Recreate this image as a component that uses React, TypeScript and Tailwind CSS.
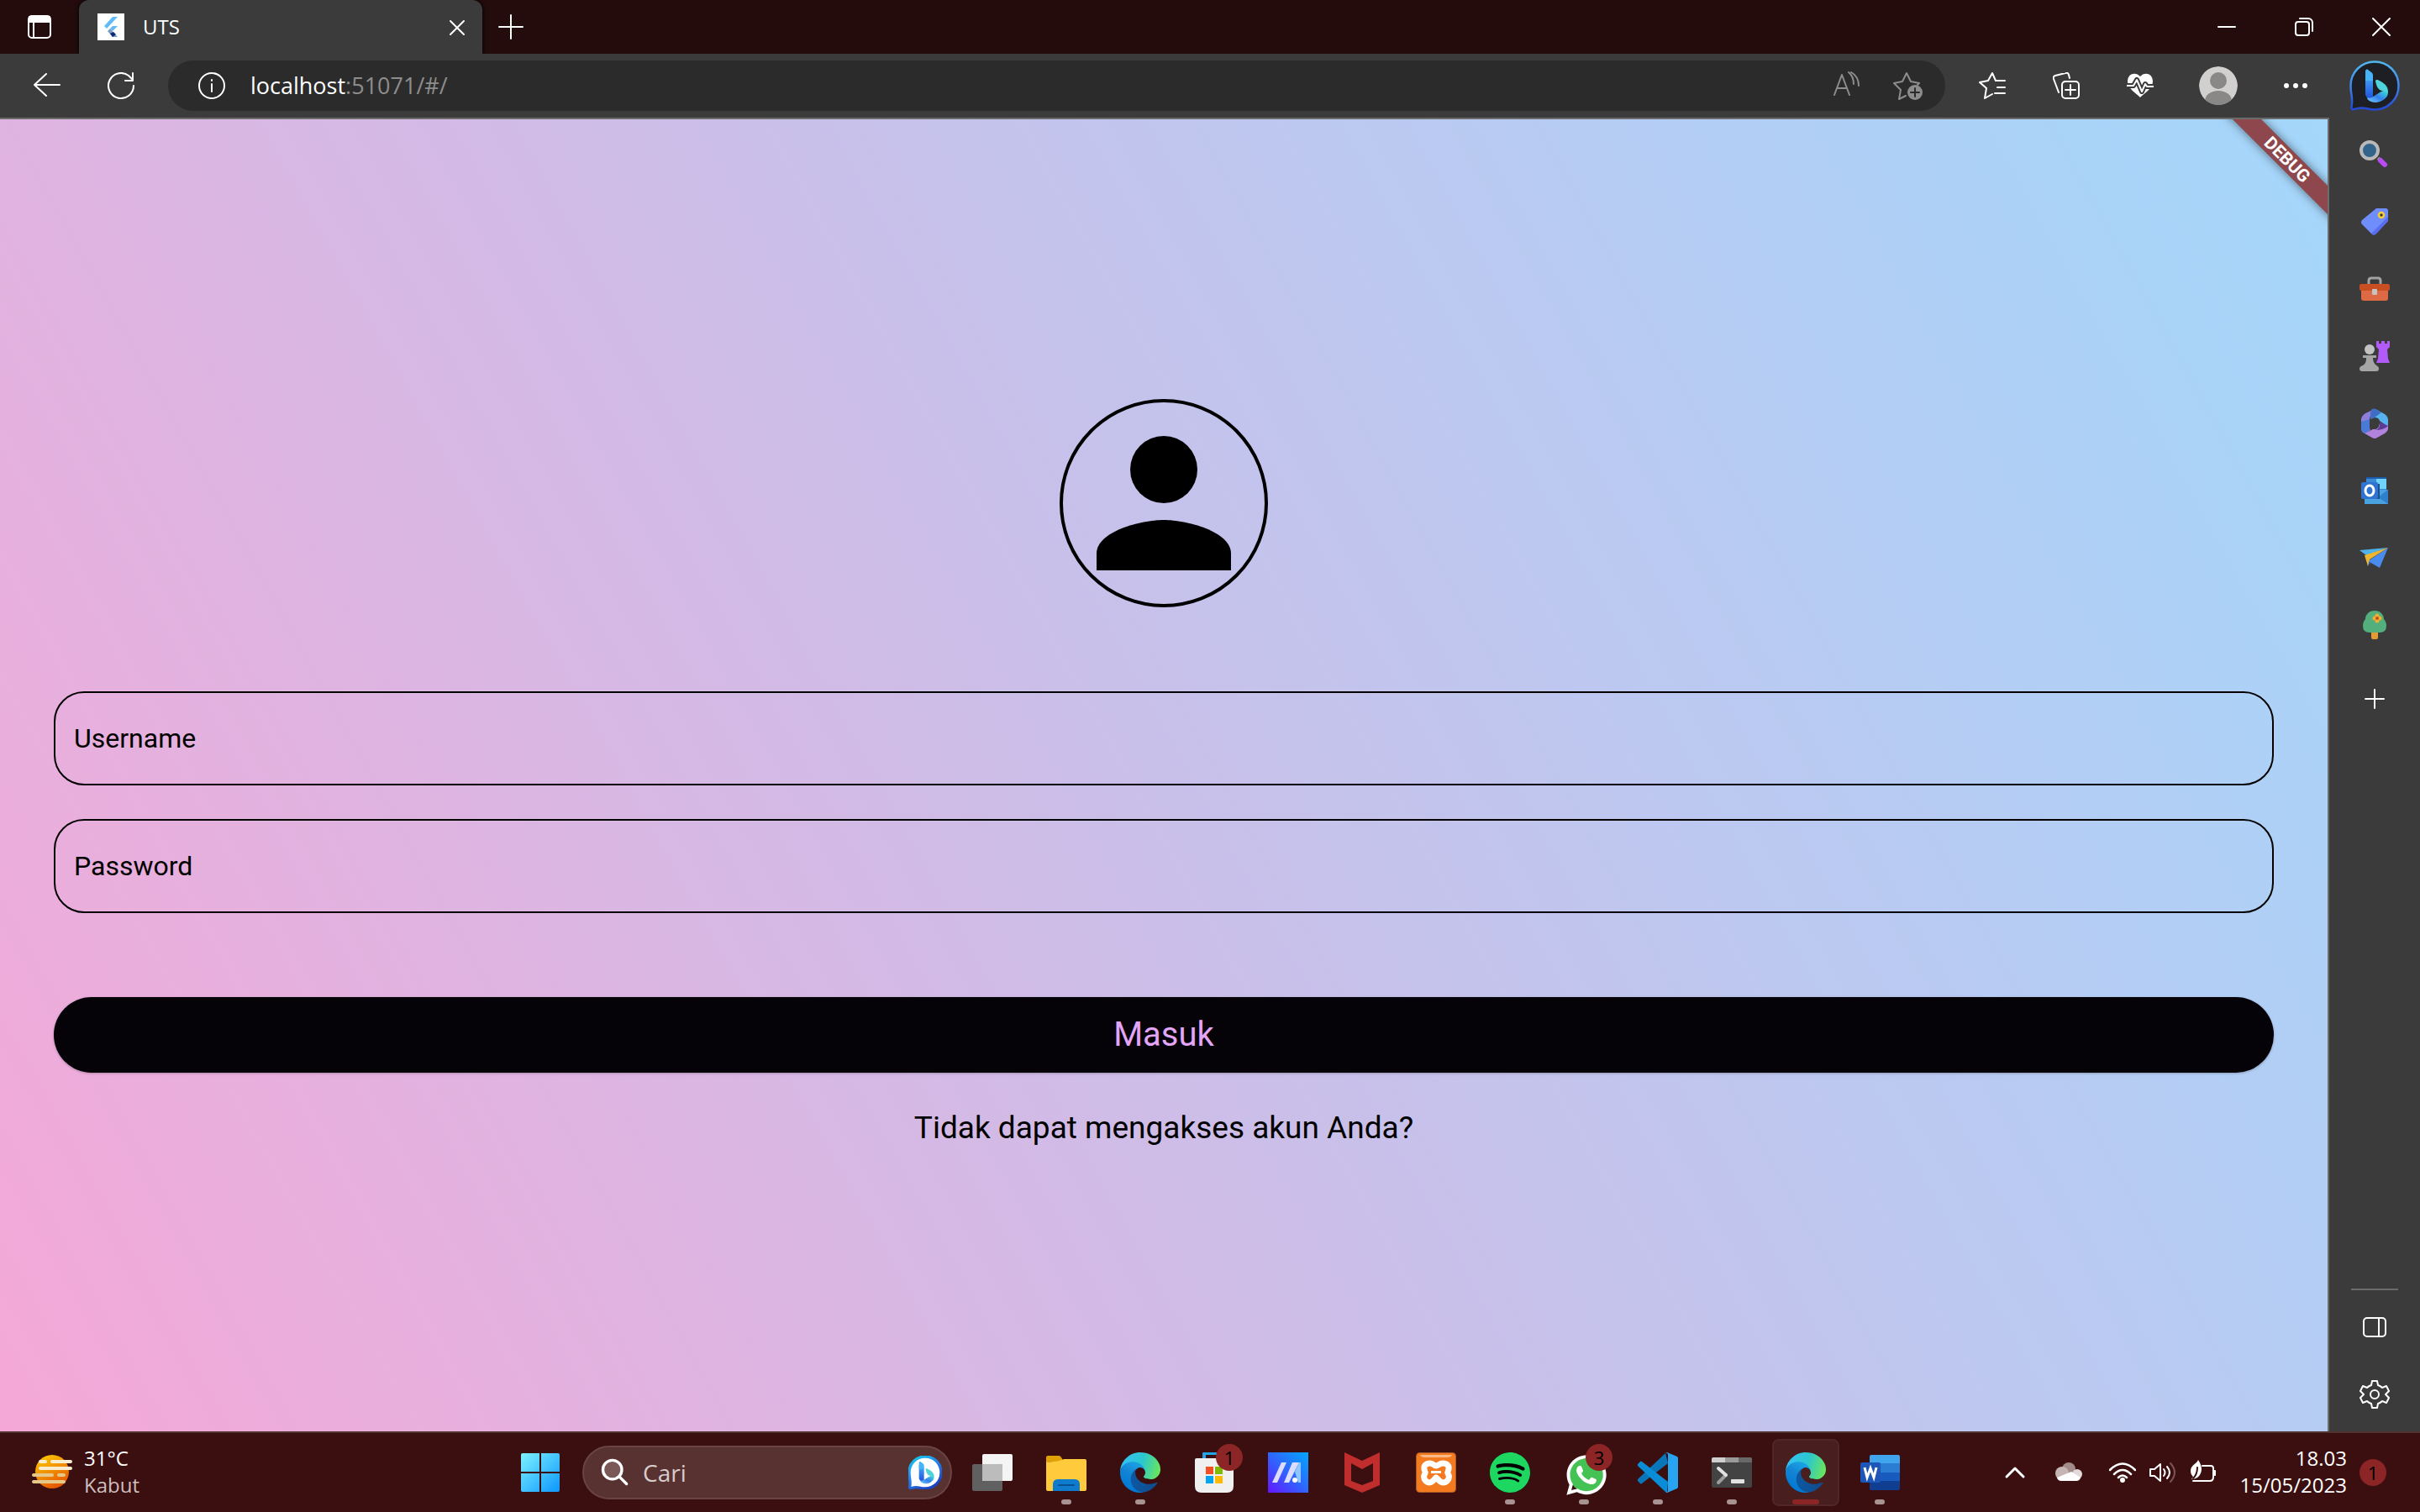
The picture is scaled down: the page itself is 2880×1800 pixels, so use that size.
import type { ReactNode } from "react";
import { FaWhatsapp } from "react-icons/fa";
import { SiSpotify } from "react-icons/si";

type IconProps = { className?: string; box?: string; children?: ReactNode };

function Line({ className = "size-8", box = "0 0 32 32", children }: IconProps) {
  return (
    <svg
      className={className}
      viewBox={box}
      fill="none"
      stroke="currentColor"
      strokeWidth="2"
      strokeLinecap="round"
      strokeLinejoin="round"
      aria-hidden="true"
    >
      {children}
    </svg>
  );
}

function Art({ className = "size-12", box = "0 0 48 48", children }: IconProps) {
  return (
    <svg className={className} viewBox={box} aria-hidden="true">
      {children}
    </svg>
  );
}

/* ---------- Shared logos ---------- */

function Gradients() {
  return (
    <svg className="absolute size-0" aria-hidden="true">
      <defs>
        <linearGradient id="edgeDark" x1="60" y1="176" x2="240" y2="176" gradientUnits="userSpaceOnUse">
          <stop offset="0" stopColor="#0c59a4" />
          <stop offset="1" stopColor="#114a8b" />
        </linearGradient>
        <linearGradient id="edgeBlue" x1="120" y1="90" x2="40" y2="230" gradientUnits="userSpaceOnUse">
          <stop offset="0" stopColor="#1b9de2" />
          <stop offset="0.4" stopColor="#1384d4" />
          <stop offset="1" stopColor="#0078d4" />
        </linearGradient>
        <linearGradient id="edgeGreen" x1="10" y1="60" x2="250" y2="130" gradientUnits="userSpaceOnUse">
          <stop offset="0" stopColor="#35c1f1" />
          <stop offset="0.5" stopColor="#2cc7cf" />
          <stop offset="1" stopColor="#6be758" />
        </linearGradient>
        <linearGradient id="bingRing" x1="0" y1="0" x2="0" y2="1">
          <stop offset="0" stopColor="#4fb6ec" />
          <stop offset="0.5" stopColor="#3f86ec" />
          <stop offset="1" stopColor="#2348cf" />
        </linearGradient>
        <linearGradient id="bingRingLight" x1="0" y1="0" x2="0.6" y2="1">
          <stop offset="0" stopColor="#0fd3e8" />
          <stop offset="0.5" stopColor="#2784ee" />
          <stop offset="1" stopColor="#1a44c4" />
        </linearGradient>
        <linearGradient id="bingStem" x1="0" y1="0" x2="0" y2="1">
          <stop offset="0" stopColor="#48b4f8" />
          <stop offset="1" stopColor="#1e54dc" />
        </linearGradient>
        <linearGradient id="bingTail" x1="0" y1="1" x2="1" y2="0">
          <stop offset="0" stopColor="#74d0fa" />
          <stop offset="0.5" stopColor="#3480ee" />
          <stop offset="1" stopColor="#3ae0d4" />
        </linearGradient>
      </defs>
    </svg>
  );
}

function EdgeLogo() {
  return (
    <Art box="0 0 256 256">
      <path fill="url(#edgeDark)" d="M231.1 190.5c-3.4 1.8-6.9 3.4-10.5 4.7-11.5 4.3-23.6 6.5-35.9 6.5-47.3 0-88.5-32.5-88.5-74.3.1-11.4 6.4-21.9 16.4-27.3-42.8 1.8-53.8 46.4-53.8 72.5 0 73.9 68.1 81.4 82.8 81.4 7.9 0 19.8-2.3 27-4.6l1.3-.4c27.6-9.5 51-28.1 66.6-52.8 1.2-1.9.6-4.3-1.2-5.5-1.3-.8-2.9-.9-4.2-.2z" />
      <path fill="url(#edgeBlue)" d="M105.7 241.4c-8.9-5.5-16.6-12.8-22.7-21.3-26.3-36-18.4-86.5 17.6-112.8 3.8-2.7 7.7-5.2 11.9-7.2 3.1-1.5 8.4-4.1 15.5-4 10.1.1 19.6 4.9 25.7 13 4 5.4 6.3 11.9 6.4 18.7 0-.2 24.5-79.6-80-79.6C36.2 48.2.1 89.9.1 126.4c-.2 19.3 4 38.5 12.1 56 27.6 58.8 94.8 87.6 156.4 67.1-21.1 6.6-44.1 3.7-62.9-8.1z" />
      <path fill="url(#edgeGreen)" d="M152.3 148.9c-.8 1-3.3 2.5-3.3 5.7 0 2.6 1.7 5.1 4.7 7.2 14.4 10 41.5 8.7 41.6 8.7 10.7 0 21.1-2.9 30.3-8.3 18.8-11 30.4-31.1 30.4-52.9.3-22.4-8-37.3-11.3-43.9C223.5 23.9 177.7 0 128 0 58 0 1 56.2 0 126.2c.5-36.5 36.8-66 80-66 3.5 0 23.5.3 42 10.1 16.3 8.6 24.9 18.9 30.8 29.2 6.2 10.7 7.3 24.1 7.3 29.5s-2.8 13.3-7.8 19.9z" />
    </Art>
  );
}

function BingLogo({ className, light = false }: { className: string; light?: boolean }) {
  return (
    <Art className={className} box="0 0 60 60">
      <path
        d="M30 1.5C14 1.5 1.5 14 1.5 30c0 12 3 13 1 25.500c-.4 2.500 1 3.300 3 2.500 6-2 10-2 14-1 3.500 1 7 1.500 10.500 1.500 16 0 28.500-12.500 28.500-28.500S46 1.500 30 1.500z"
        fill={light ? "#ffffff" : "#1d1f24"}
        stroke={light ? "url(#bingRingLight)" : "url(#bingRing)"}
        strokeWidth={light ? 5 : 2.5}
      />
      <path d="M19 17c0-2 1.500-2.500 3-1.500l4 3c1.500 1 2 2.500 2 4V42c0 3-4 4-6.500 2.500C19.500 43 19 41 19 39z" fill="url(#bingStem)" />
      <path d="M19 13c0-2 1.500-3 3-2l4 3c1.500 1 2 2.500 2 4v6h-9z" fill="#48b4f8" />
      <path d="M31 25c0-2 1.500-2.500 3.500-1.500C42 27 46 31 46 37c0 2-.5 3.500-1.500 5-.5-3-3-5-6-6-4-1.300-5.500-4-6.500-7.500z" fill="#4fd3dc" />
      <path d="M21 44c3 1.500 5.500 0 8-1.500l8-5c4-2.500 8.500 0 8.500 3.500-1 3-3.500 5-6 6.500-4 2.400-8 3-12 2-4-1-6.500-3-6.500-5.500z" fill="url(#bingTail)" />
    </Art>
  );
}

/* ---------- Browser chrome ---------- */

function TitleBar() {
  return (
    <header className="flex h-16 items-center bg-[#240c0c] text-white">
      <button aria-label="Tab actions" className="flex h-16 w-[94px] items-center justify-center">
        <Line className="size-8">
          <rect x="3" y="3" width="26" height="26" rx="4" />
          <path d="M4 4h24v6H4z" fill="currentColor" />
          <path d="M9 10v18" />
        </Line>
      </button>
      <div className="flex h-16 w-[480px] items-center rounded-t-xl bg-[#3b3b3b] pr-[14px] pl-[22px] shadow-[0_0_6px_#000000]">
        <Art className="size-8" box="0 0 32 32">
          <path d="M0 0h32v32H0z" fill="#ffffff" />
          <path d="M18 4h6L11 18l-3-3z" fill="#5fbcf6" />
          <path d="M18 15h6l-6 6-3-3z" fill="#5fbcf6" />
          <path d="M12 21l3-3 9 10h-6z" fill="#7f9cc4" />
          <path d="M15 24l4-2 3 3-4 3z" fill="#0b2a78" />
        </Art>
        <span className="ml-[22px] text-2xl">UTS</span>
        <button aria-label="Close tab" className="ml-auto flex size-8 items-center justify-center">
          <Line className="size-8">
            <path d="M8 9l16 16M24 9L8 25" />
          </Line>
        </button>
      </div>
      <button aria-label="New tab" className="ml-4 flex size-9 items-center justify-center">
        <Line className="size-8">
          <path d="M16 2v28M2 16h28" />
        </Line>
      </button>
      <div className="ml-auto flex">
        <button aria-label="Minimize" className="flex h-16 w-[92px] items-center justify-center">
          <Line>
            <path d="M6 16h20" />
          </Line>
        </button>
        <button aria-label="Restore" className="flex h-16 w-[92px] items-center justify-center">
          <Line>
            <rect x="6" y="10" width="16" height="16" rx="3" />
            <path d="M11 6h10a5 5 0 0 1 5 5v10" />
          </Line>
        </button>
        <button aria-label="Close" className="flex h-16 w-[92px] items-center justify-center">
          <Line>
            <path d="M6 6l20 20M26 6L6 26" />
          </Line>
        </button>
      </div>
    </header>
  );
}

function Toolbar() {
  return (
    <div className="flex h-[76px] items-center bg-[#3b3b3b] text-white">
      <button aria-label="Back" className="ml-10 size-8">
        <Line>
          <path d="M31 15H1M15 2L1 15l14 13" />
        </Line>
      </button>
      <button aria-label="Refresh" className="ml-14 size-8">
        <Line>
          <path d="M31 16A15 15 0 1 1 25 4l4 4M30 1v9h-9" />
        </Line>
      </button>
      <div className="ml-10 flex h-[60px] flex-1 items-center rounded-full bg-[#2b2b2b] pr-[26px] pl-9">
        <Line>
          <circle cx="16" cy="16" r="15" />
          <path d="M16 14v9M16 9v1" />
        </Line>
        <a href="#/" className="ml-[30px] text-[27px] leading-10 text-[#8d8d8d]">
          <span className="text-white">localhost</span>:51071/#/
        </a>
        <div className="ml-auto flex gap-10 text-[#8d8d8d]">
          <button aria-label="Read aloud" className="size-8">
            <Line>
              <path d="M2 29L11 5l9 24M5 21h12M19 2q6 5 6 14M22 2q9 5 9 16" />
            </Line>
          </button>
          <button aria-label="Add to favorites" className="size-9">
            <Line className="size-9" box="0 0 36 36">
              <path d="M15 30l-8 4 2-11-8-8 10-2 5-10 5 10 10 2-2 2" />
              <circle cx="26" cy="26" r="9" fill="currentColor" stroke="none" />
              <path d="M26 21v10M21 26h10" stroke="#2b2b2b" />
            </Line>
          </button>
        </div>
      </div>
      <div className="ml-10 flex items-center gap-14">
        <button aria-label="Favorites" className="size-8">
          <Line>
            <path d="M16 26l-9 5 2-12-8-7 10-2 5-9 4 9h11M22 18h9M19 25h12" />
          </Line>
        </button>
        <button aria-label="Collections" className="size-8">
          <Line>
            <rect x="11" y="11" width="20" height="20" rx="4" />
            <path d="M21 15v12M15 21h12M7 24L1 8q-1-3 2-4l12-3q3-1 4 2l1 4" />
          </Line>
        </button>
        <button aria-label="Browser essentials" className="size-8">
          <Line>
            <path d="M16 5C11-1 1 1 1 11c0 8 10 14 15 19 5-5 15-11 15-19C31 1 21-1 16 5z" fill="currentColor" stroke="none" />
            <path d="M0 16h8l4-7 6 14 4-9 2 3h8" stroke="#3b3b3b" strokeWidth="6" />
            <path d="M0 16h8l4-7 6 14 4-9 2 3h8" />
          </Line>
        </button>
      </div>
      <button aria-label="Profile" className="ml-[54px] size-[46px]">
        <Art className="size-[46px] rounded-full" box="0 0 46 46">
          <circle cx="23" cy="23" r="23" fill="#d2d0ce" />
          <circle cx="23" cy="17" r="10" fill="#8a8886" />
          <ellipse cx="23" cy="41" rx="16" ry="12" fill="#8a8886" />
        </Art>
      </button>
      <button aria-label="Settings and more" className="ml-[53px] size-8">
        <Art className="size-8" box="0 0 32 32">
          <g fill="#ffffff">
            <circle cx="5" cy="16" r="3" />
            <circle cx="16" cy="16" r="3" />
            <circle cx="27" cy="16" r="3" />
          </g>
        </Art>
      </button>
      <button aria-label="Bing chat" className="mr-6 ml-12 size-[60px]">
        <BingLogo className="size-[60px]" />
      </button>
    </div>
  );
}

/* ---------- Edge sidebar ---------- */

const sidebarItems: { name: string; art: ReactNode }[] = [
  {
    name: "Search",
    art: (
      <>
        <path d="M22 22l4 4" stroke="#8a8886" strokeWidth="4" />
        <circle cx="12" cy="13" r="10" fill="#33658c" stroke="#b9b9b9" strokeWidth="4" />
        <path d="M25 25l5 5" stroke="#b94bf7" strokeWidth="6" strokeLinecap="round" />
      </>
    ),
  },
  {
    name: "Shopping",
    art: (
      <>
        <path d="M20 2h11q3 0 3 3v12L20 32q-3 3-6 0l-11-11q-2-2 0-5z" fill="#6f8dfb" />
        <path d="M34 12v5L20 32q-3 3-6 0z" fill="#5a6cf0" />
        <circle cx="26" cy="10" r="3" fill="#3b3b3b" stroke="#f7cf3a" strokeWidth="2.500" />
      </>
    ),
  },
  {
    name: "Tools",
    art: (
      <>
        <path d="M11 12V8q0-3 3-3h8q3 0 3 3v4" fill="none" stroke="#a2a2a2" strokeWidth="3" />
        <rect x="2" y="14" width="32" height="18" rx="3" fill="#dd6a45" />
        <rect x="0" y="12" width="36" height="8" rx="2" fill="#c94f22" />
        <rect x="15" y="18" width="6" height="7" rx="1" fill="#c4c4c4" />
      </>
    ),
  },
  {
    name: "Games",
    art: (
      <>
        <path d="M20 0h3v3h3V0h4v3h3V0h3v7l-3 3 1 11 2 5H20l2-5 1-11-3-3z" fill="#b25bf8" />
        <circle cx="12" cy="10" r="6" fill="#c2c2c2" />
        <path d="M4 17h16v3h-4c0 5 2 7 4 9q3 1 3 4 0 3-3 3H3q-3 0-3-3 0-3 4-4c3-2 4-4 4-9H4z" fill="#a5a5a5" />
      </>
    ),
  },
  {
    name: "Microsoft 365",
    art: (
      <>
        <path d="M18 1l-11 5q-5 3-5 8v10q0 5 5 6l6-4q-1-1-1-4V13q0-4 4-6z" fill="#8d7fd8" />
        <path d="M2 16v8q0 5 5 6l5-4V13z" fill="#4a7ad6" />
        <path d="M15 1q3-1 6 1l9 5q4 3 4 7v8l-10-7q-1-4-6-4l-5 2V6z" fill="#57b3ee" />
        <path d="M15 1q3-1 6 1l5 3-8 6-5 2V5z" fill="#3f6dc6" />
        <path d="M34 20v4q0 3-4 6l-9 5q-3 2-6 0l-9-5 10-5q7 1 8-7z" fill="#b283dc" />
        <path d="M24 16v5q-1 4-5 5 10 0 15-5z" fill="#5a3a92" />
      </>
    ),
  },
  {
    name: "Outlook",
    art: (
      <>
        <path d="M8 2h24v15H8z" fill="#3a8ad6" />
        <path d="M20 4h12v12H20z" fill="#6fd3fa" />
        <path d="M8 2h24v2H8z" fill="#1a5cab" />
        <path d="M6 17h28v17H6z" fill="#4aa3e0" />
        <path d="M34 17v17L22 26z" fill="#2f80cc" />
        <path d="M8 10h16v18H8z" fill="#1c4f8e" />
        <rect x="2" y="8" width="20" height="20" rx="2" fill="#2f74d0" />
        <ellipse cx="12" cy="18" rx="5" ry="6" fill="none" stroke="#ffffff" strokeWidth="3" />
      </>
    ),
  },
  {
    name: "Drop",
    art: (
      <>
        <path d="M0 9l34-3L8 15z" fill="#4fb2e8" />
        <path d="M34 6L24 30l-14-8z" fill="#4a8cee" />
        <path d="M10 22l-1 6 5-4z" fill="#2a5cc0" />
        <path d="M34 6L6 15l4 13 2-8z" fill="#eeb52f" />
      </>
    ),
  },
  {
    name: "Browser games",
    art: (
      <>
        <path d="M14 24h8v9q0 2-2 2h-4q-2 0-2-2z" fill="#e59a33" />
        <path d="M18 1c7 0 11 5 11 10 2 2 3 5 3 8q0 8-8 8H12q-8 0-8-8c0-3 1-6 3-8C7 6 11 1 18 1z" fill="#53b07c" />
        <g fill="#f0ae33">
          <circle cx="21" cy="7" r="2.500" />
          <circle cx="21" cy="13" r="2.500" />
          <circle cx="18" cy="10" r="2.500" />
          <circle cx="24" cy="10" r="2.500" />
        </g>
        <circle cx="21" cy="10" r="2" fill="#c2521c" />
      </>
    ),
  },
];

function Sidebar() {
  return (
    <aside className="flex w-[110px] shrink-0 flex-col items-center border-l-2 border-[#6b6b6b] bg-[#3b3b3b] text-white">
      <nav className="flex flex-col items-center pt-1">
        {sidebarItems.map((item) => (
          <button key={item.name} aria-label={item.name} className="flex size-20 items-center justify-center">
            <Art className="size-9" box="0 0 36 36">
              {item.art}
            </Art>
          </button>
        ))}
        <button aria-label="Customize" className="mt-2 flex size-20 items-center justify-center">
          <Line className="size-6" box="0 0 24 24">
            <path d="M12 1v22M1 12h22" />
          </Line>
        </button>
      </nav>
      <div className="mt-auto mb-1 flex flex-col items-center">
        <div className="h-0.5 w-14 bg-[#6b6b6b]" />
        <button aria-label="Hide sidebar" className="mt-1 flex size-20 items-center justify-center">
          <Line>
            <rect x="3" y="5" width="26" height="22" rx="4" />
            <path d="M21 5v22" />
          </Line>
        </button>
        <button aria-label="Settings" className="flex size-20 items-center justify-center">
          <Line className="size-9" box="0 0 36 36">
            <circle cx="18" cy="18" r="5" />
            <path d="M15 2h6l1 5q3 1 5 3l5-2 3 6-4 4 4 4-3 6-5-2q-2 2-5 3l-1 5h-6l-1-5q-3-1-5-3l-5 2-3-6 4-4-4-4 3-6 5 2q2-2 5-3z" />
          </Line>
        </button>
      </div>
    </aside>
  );
}

/* ---------- Login page ---------- */

const fieldClass =
  "h-28 w-full rounded-[36px] border-2 border-black bg-transparent px-[22px] text-[32px] text-black outline-none placeholder:text-black placeholder:opacity-100";

function LoginPage() {
  return (
    <main className="relative flex flex-1 flex-col items-center justify-center bg-[linear-gradient(61deg,#f5a8d8_0%,#cabfe9_48%,#a4d7fb_100%)] px-16 font-[Roboto,sans-serif]">
      <div className="pointer-events-none absolute top-0 right-0 size-36 overflow-hidden">
        <div className="absolute top-[36px] right-[-52px] flex h-6 w-[200px] rotate-45 items-center justify-center bg-[#8e474c] text-[21px] leading-6 font-bold text-white shadow-[0_0_12px_rgba(0,0,0,0.5)]">
          DEBUG
        </div>
      </div>
      <div className="size-[248px] rounded-full border-4 border-black">
        <svg viewBox="0 0 24 24" className="size-60" aria-hidden="true">
          <circle cx="12" cy="8" r="4" />
          <path d="M12 14c-2.670 0-8 1.340-8 4v2h16v-2c0-2.660-5.330-4-8-4z" />
        </svg>
      </div>
      <form className="mt-[100px] flex w-full flex-col items-center" onSubmit={(e) => e.preventDefault()}>
        <input type="text" aria-label="Username" placeholder="Username" className={fieldClass} />
        <input type="password" aria-label="Password" placeholder="Password" className={`mt-10 ${fieldClass}`} />
        <button
          type="submit"
          className="mt-[100px] h-[90px] w-full rounded-full bg-[#050308] text-[40px] text-[#e2a5f8] shadow-[0_1px_3px_rgba(0,0,0,0.25)]"
        >
          Masuk
        </button>
        <a href="#/" className="mt-[38px] text-[37px] leading-[56px] text-black">
          Tidak dapat mengakses akun Anda?
        </a>
      </form>
    </main>
  );
}

/* ---------- Windows taskbar ---------- */

type TaskItem = { name: string; art: ReactNode; badge?: string; state?: "open" | "active" };

const tasks: TaskItem[] = [
  {
    name: "Task view",
    art: (
      <Art>
        <rect x="12" y="2" width="36" height="32" rx="2" fill="#f4f4f4" />
        <rect x="0" y="14" width="36" height="32" rx="2" fill="#606060" />
        <path d="M12 14h22q2 0 2 2v18H12z" fill="#bcbcbc" />
      </Art>
    ),
  },
  {
    name: "File Explorer",
    state: "open",
    art: (
      <Art>
        <path d="M0 6q0-2 2-2h13q2 0 3 2l3 5H0z" fill="#e0a106" />
        <path d="M0 11q10 1 19-2l2-1h25q2 0 2 2v34q0 2-2 2H2q-2 0-2-2z" fill="#ffcb3d" />
        <path d="M8 46V38q0-6 6-6h20q6 0 6 6v8z" fill="#0f7bcc" />
        <path d="M15 39h18" stroke="#0a4f92" strokeWidth="2" strokeLinecap="round" />
      </Art>
    ),
  },
  { name: "Microsoft Edge", state: "open", art: <EdgeLogo /> },
  {
    name: "Microsoft Store",
    badge: "1",
    art: (
      <Art>
        <path d="M12 11V2q0-1 1-1h22q1 0 1 1v9" fill="none" stroke="#1fa7ea" strokeWidth="4" />
        <path d="M1 9q0-2 2-2h42q2 0 2 2v31q0 8-8 8H9q-8 0-8-8z" fill="#f0f0f0" />
        <path d="M14 17h9v9h-9z" fill="#f25022" />
        <path d="M25 17h9v9h-9z" fill="#7fba00" />
        <path d="M14 28h9v9h-9z" fill="#00a4ef" />
        <path d="M25 28h9v9h-9z" fill="#ffb900" />
      </Art>
    ),
  },
  {
    name: "MyASUS",
    art: (
      <Art>
        <linearGradient id="asus" x1="0" y1="1" x2="1" y2="0">
          <stop offset="0" stopColor="#6416ff" />
          <stop offset="0.5" stopColor="#2f66ff" />
          <stop offset="1" stopColor="#00a8ff" />
        </linearGradient>
        <path d="M0 0h48v48H0z" fill="url(#asus)" />
        <path d="M16 12h6L11 36H5z" fill="#dcdcff" />
        <path d="M29 12h8L25 36h-6z" fill="#dcdcff" />
        <path d="M37 12h2v24h-3l-4-13z" fill="#8fc6ff" />
        <circle cx="32" cy="33" r="3" fill="#ffffff" />
      </Art>
    ),
  },
  {
    name: "McAfee",
    art: (
      <Art>
        <path
          fillRule="evenodd"
          fill="#bf2d2d"
          d="M3 0l21 10L45 0v39l-21 9-21-9zM11 13v21l13 5 13-5V13l-13 7z"
        />
      </Art>
    ),
  },
  {
    name: "XAMPP",
    art: (
      <Art>
        <rect x="0.500" y="0.500" width="47" height="47" rx="4" fill="#f47a20" stroke="#a85a28" />
        <path d="M5 3h38q-1 3-6 3H11Q6 6 5 3z" fill="#fbb98a" />
        <path
          d="M17 13c-5 0-8 3-7 7 0 2 2 3 1 5-3 4-1 10 5 11 5 0 6-5 8-6 2 1 4 6 9 6 6-1 8-7 5-11-1-2 1-3 1-5 1-4-2-7-7-7-4 0-5 3-8 3s-3-3-7-3z"
          fill="none"
          stroke="#ffffff"
          strokeWidth="7"
          strokeLinejoin="round"
        />
        <path d="M18 22h12v3H18z" fill="#ffffff" />
      </Art>
    ),
  },
  {
    name: "Spotify",
    state: "open",
    art: (
      <span className="flex size-12 rounded-full bg-black">
        <SiSpotify className="size-12 text-[#1ed760]" aria-hidden="true" />
      </span>
    ),
  },
  {
    name: "WhatsApp",
    badge: "3",
    state: "open",
    art: (
      <span className="grid size-12 place-items-center">
        <span className="col-start-1 row-start-1 size-10 rounded-full bg-[#44c254]" />
        <FaWhatsapp className="col-start-1 row-start-1 size-[54px] text-white" aria-hidden="true" />
      </span>
    ),
  },
  {
    name: "Visual Studio Code",
    state: "open",
    art: (
      <Art>
        <path d="M33 1l3 12L5 37q-1 1-2 0l-3-3q-1-1 0-2z" fill="#0a76ba" />
        <path d="M0 16q-1-1 0-2l3-3q1-1 2 0l31 24-1 13q-1 0-3-2z" fill="#0b8cd6" />
        <path d="M35 0l12 5q1 1 1 2v34q0 1-1 2l-12 5q-1 0-2-1 3 1 3-2V3q0-3-3-2 1-1 2-1z" fill="#27a5f2" />
      </Art>
    ),
  },
  {
    name: "Terminal",
    state: "open",
    art: (
      <Art>
        <rect x="0" y="6" width="48" height="36" rx="2" fill="#434343" />
        <path d="M0 12V8q0-2 2-2h14v6z" fill="#cfcfcf" />
        <path d="M16 6h16v6H16z" fill="#9a9a9a" />
        <path d="M32 6h14q2 0 2 2v4H32z" fill="#686868" />
        <path d="M17 27l-9 9" stroke="#9c9c9c" strokeWidth="4" strokeLinecap="round" />
        <path d="M8 19l9 8" stroke="#e2e2e2" strokeWidth="4" strokeLinecap="round" />
        <rect x="23" y="32" width="16" height="5" rx="1" fill="#e2e2e2" />
      </Art>
    ),
  },
  { name: "UTS - Microsoft Edge", state: "active", art: <EdgeLogo /> },
  {
    name: "Word",
    state: "open",
    art: (
      <Art>
        <path d="M12 13V5q0-2 2-2h32q2 0 2 2v8z" fill="#41a5ee" />
        <path d="M12 13h36v11H12z" fill="#2b7cd3" />
        <path d="M12 24h36v10H12z" fill="#185abd" />
        <path d="M12 34h36v9q0 2-2 2H14q-2 0-2-2z" fill="#103f91" />
        <rect x="1" y="12" width="24" height="24" rx="2" fill="#1b56b8" />
        <path d="M6 18l3 12 4-11 4 11 3-12" fill="none" stroke="#ffffff" strokeWidth="3" />
      </Art>
    ),
  },
];

function TaskButton({ item }: { item: TaskItem }) {
  const active = item.state === "active";
  return (
    <button
      aria-label={item.name}
      className={`relative flex size-20 items-center justify-center rounded-lg ${
        active ? "border-2 border-[#512626] bg-[#481e1e]" : ""
      }`}
    >
      {item.art}
      {item.badge && (
        <span className="absolute top-1.5 right-1.5 flex size-8 items-center justify-center rounded-full bg-[#8c2525] text-[22px] leading-8 text-black">
          {item.badge}
        </span>
      )}
      {item.state === "open" && <span className="absolute bottom-0.5 h-1.5 w-3 rounded-full bg-[#a89393]" />}
      {active && <span className="absolute bottom-0 h-1.5 w-8 rounded-full bg-[#8c2525]" />}
    </button>
  );
}

function Taskbar() {
  return (
    <footer className="grid h-24 grid-cols-[1fr_auto_1fr] items-center border-t-2 border-[#53332f] bg-[#3b0f0f] text-white">
      <button className="ml-[38px] flex items-center gap-3.5 justify-self-start pb-0.5 text-left text-2xl leading-8">
        <Art>
          <linearGradient id="sun" x1="0" y1="0" x2="0.500" y2="1">
            <stop offset="0" stopColor="#ffd200" />
            <stop offset="1" stopColor="#e65a00" />
          </linearGradient>
          <circle cx="24" cy="24" r="20" fill="url(#sun)" />
          <g strokeWidth="4" strokeLinecap="round">
            <path d="M10 12h6M24 12h22M10 20h36" stroke="#f8ecd0" />
            <path d="M2 28h22M32 28h6M2 36h36" stroke="#e6c88a" />
          </g>
        </Art>
        <span className="flex flex-col">
          <span>31°C</span>
          <span className="text-[#cdbfbf]">Kabut</span>
        </span>
      </button>

      <div className="flex items-center gap-2">
        <button aria-label="Start" className="flex size-20 items-center justify-center">
          <Art>
            <linearGradient id="win" x1="0" y1="0" x2="48" y2="48" gradientUnits="userSpaceOnUse">
              <stop offset="0" stopColor="#80f4ff" />
              <stop offset="1" stopColor="#0a94ff" />
            </linearGradient>
            <path
              fill="url(#win)"
              d="M3 1h20v22H1V3q0-2 2-2zM25 1h20q2 0 2 2v20H25zM1 25h22v22H3q-2 0-2-2zM25 25h22v20q0 2-2 2H25z"
            />
          </Art>
        </button>
        <label className="ml-0.5 flex h-16 w-[440px] items-center rounded-full border-2 border-[#6a4444] bg-[#583131] pr-2.5 pl-[18px]">
          <Line className="size-9">
            <circle cx="14" cy="13" r="10" fill="#7a5858" strokeWidth="3" />
            <path d="M22 21l7 7" strokeWidth="3" />
          </Line>
          <input
            type="search"
            aria-label="Cari"
            placeholder="Cari"
            className="ml-4 min-w-0 flex-1 bg-transparent text-[28px] leading-10 outline-none placeholder:text-[#d8cccc] placeholder:opacity-100"
          />
          <BingLogo className="size-10" light />
        </label>
        {tasks.map((item) => (
          <TaskButton key={item.name} item={item} />
        ))}
      </div>

      <div className="mr-10 flex items-center justify-self-end">
        <button aria-label="Show hidden icons" className="size-8">
          <Line>
            <path d="M6 21l10-10 10 10" strokeWidth="3" />
          </Line>
        </button>
        <button aria-label="OneDrive" className="ml-8 size-8">
          <Art className="size-8" box="0 0 32 32">
            <circle cx="16" cy="12" r="8" fill="#a38b8b" />
            <circle cx="8" cy="17" r="8" fill="#c5b5b5" />
            <circle cx="26" cy="18" r="6" fill="#e2dada" />
            <path d="M2 22l17-7 11 7q-1 4-5 4H7q-4 0-5-4z" fill="#ffffff" />
          </Art>
        </button>
        <button aria-label="Network, volume and battery" className="ml-8 flex items-center gap-4">
          <Line>
            <path d="M1 13q15-15 30 0M6 18q10-10 20 0M11 22q5-5 10 0" strokeWidth="2.500" />
            <circle cx="16" cy="25" r="2" fill="currentColor" />
          </Line>
          <Line>
            <path d="M1 12v8h5l7 6V6l-7 6zM17 12q3 4 0 8M21 9q6 7 0 14" />
            <path d="M25 5q10 11 0 22" stroke="#7a5555" />
          </Line>
          <Line>
            <path d="M15 8h10q3 0 3 3v10q0 5-4 5H4" />
            <path d="M29 14h1v5h-1z" fill="currentColor" />
            <path d="M10 1c-2 5-9 6-9 13 0 3 1 5 3 7l-2 3q8 0 11-7c2-5 1-10-3-16z" fill="currentColor" stroke="none" />
            <path d="M9 10q0 8-5 13" stroke="#3b0f0f" />
          </Line>
        </button>
        <button className="ml-7 pb-0.5 text-right text-2xl leading-8">
          18.03
          <br />
          15/05/2023
        </button>
        <button className="ml-[15px] flex size-8 items-center justify-center rounded-full bg-[#8c2525] text-[22px] leading-8 text-black">
          1
        </button>
      </div>
    </footer>
  );
}

export default function App() {
  return (
    <div className="flex min-h-screen flex-col font-['Open_Sans',sans-serif]">
      <Gradients />
      <TitleBar />
      <Toolbar />
      <div className="flex flex-1">
        <div className="flex flex-1 border-t-2 border-[#6b6b6b]">
          <LoginPage />
        </div>
        <Sidebar />
      </div>
      <Taskbar />
    </div>
  );
}
